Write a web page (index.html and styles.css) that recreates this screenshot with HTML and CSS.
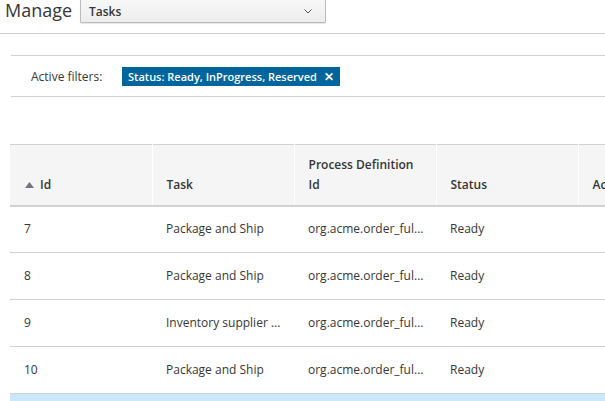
FILE: index.html
```html
<!DOCTYPE html>
<html>
<head>
<meta charset="utf-8">
<link rel="stylesheet" href="styles.css">
</head>
<body>
<div class="topbar">
  <span class="title">Manage</span>
  <div class="select">
    <span class="select-value">Tasks</span>
    <svg class="chev" width="8" height="5" viewBox="0 0 8 5"><path d="M0.5 0.5 L4 4 L7.5 0.5" fill="none" stroke="#4d5258" stroke-width="1"/></svg>
  </div>
</div>
<div class="panel">
  <div class="filters">
    <span class="filters-label">Active filters:</span>
    <span class="chip">Status: Ready, InProgress, Reserved <span class="chip-x">✕</span></span>
  </div>
</div>
<div class="table-wrap">
  <table class="grid">
    <thead>
      <tr>
        <th><span class="sort"><svg width="9" height="6" viewBox="0 0 9 6"><path d="M4.5 0 L9 6 L0 6 Z" fill="#72767b"/></svg>Id</span></th>
        <th>Task</th>
        <th>Process Definition<br>Id</th>
        <th>Status</th>
        <th>Actions</th>
      </tr>
    </thead>
    <tbody>
      <tr><td>7</td><td>Package and Ship</td><td>org.acme.order_ful...</td><td>Ready</td><td></td></tr>
      <tr><td>8</td><td>Package and Ship</td><td>org.acme.order_ful...</td><td>Ready</td><td></td></tr>
      <tr><td>9</td><td>Inventory supplier ...</td><td>org.acme.order_ful...</td><td>Ready</td><td></td></tr>
      <tr><td>10</td><td>Package and Ship</td><td>org.acme.order_ful...</td><td>Ready</td><td></td></tr>
      <tr class="selected"><td></td><td></td><td></td><td></td><td></td></tr>
    </tbody>
  </table>
</div>
</body>
</html>
```
FILE: styles.css
```css
html, body {
  margin: 0;
  padding: 0;
  background: #fff;
  overflow: hidden;
}
body {
  font-family: "Open Sans", "Liberation Sans", sans-serif;
  color: #363636;
  font-size: 12px;
  width: 605px;
  height: 401px;
}
.topbar {
  display: flex;
  align-items: flex-start;
  height: 41px;
  margin-top: -7px;
  border-bottom: 1px solid #d1d1d1;
  box-sizing: border-box;
}
.title {
  font-size: 18px;
  color: #363636;
  margin-left: 5px;
  width: 75px;
  line-height: 24px;
  margin-top: 5px;
}
.select {
  display: flex;
  align-items: center;
  justify-content: space-between;
  width: 246px;
  height: 30px;
  box-sizing: border-box;
  border: 1px solid #bbb;
  border-radius: 1px;
  background: linear-gradient(#fafafa, #ededed);
  box-shadow: 0 1px 1px rgba(3,3,3,0.1);
  padding: 6px 13px 0 8px;
}
.select-value {
  font-weight: 600;
  font-size: 12px;
  color: #363636;
}
.chev { display: block; margin-top: 1px; }
.panel {
  margin-left: 11px;
  margin-top: 21px;
  border-top: 1px solid #d1d1d1;
  border-bottom: 1px solid #d1d1d1;
}
.filters {
  display: flex;
  align-items: center;
  height: 40px;
  padding-left: 20px;
}
.filters-label {
  width: 91px;
  font-size: 12px;
}
.chip {
  display: inline-flex;
  align-items: center;
  height: 19px;
  background: #00659c;
  color: #fff;
  font-weight: 600;
  font-size: 11px;
  padding: 0 6px 0 6px;
}
.chip-x {
  font-weight: 700;
  font-size: 11.5px;
  margin-left: 7px;
}
.table-wrap {
  margin-top: 47px;
  margin-left: 10px;
  overflow: hidden;
}
.grid {
  border-collapse: collapse;
  table-layout: fixed;
  width: 710px;
}
.grid th, .grid td {
  width: 142px;
  box-sizing: border-box;
  text-align: left;
  padding: 0 14px;
  white-space: nowrap;
}
.grid thead tr {
  border-top: 1px solid #d1d1d1;
  border-bottom: 2px solid #d1d1d1;
}
.grid th {
  background: #f5f5f5;
  height: 61px;
  vertical-align: bottom;
  padding-bottom: 10px;
  font-weight: 600;
  line-height: 20px;
  color: #363636;
  border-left: 1px solid #fff;
}
.grid th:first-child { border-left: none; }
.sort {
  display: inline-flex;
  align-items: center;
  gap: 6px;
}
.sort svg { display: block; margin-left: 1px; }
.grid td {
  height: 47px;
  border-bottom: 1px solid #d1d1d1;
  line-height: 20px;
  vertical-align: middle;
  padding-bottom: 1px;
}
.grid tr.selected td {
  background: #cbe8fa;
  border-bottom: none;
}
```
